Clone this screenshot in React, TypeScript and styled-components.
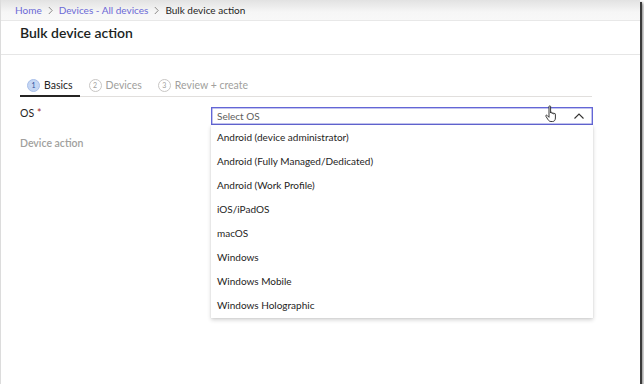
import React from "react";
import styled, { createGlobalStyle } from "styled-components";

const Global = createGlobalStyle`
  html, body { margin: 0; padding: 0; background: #ffffff; }
  body { font-family: Lato, "Noto Sans", sans-serif; color: #323130; }
  * { box-sizing: border-box; }
`;

const Frame = styled.div`
  position: relative;
  width: 640px;
  height: 384px;
  background: #fff;
  border-left: 1px solid #dcdcdc;
  box-shadow: 2px 2px 0 0 #3a3a3a, 3px 3px 3px 0 #7a7a7a;
  display: flex;
  flex-direction: column;
`;

const Breadcrumbs = styled.nav`
  height: 21px;
  flex: none;
  display: flex;
  align-items: center;
  gap: 5px;
  padding-left: 14px;
  font-size: 10px;
  background: linear-gradient(#e2e2e2, #f6f6f6 60%, #f8f8f8);
  border-bottom: 1px solid #e8e8e8;
`;

const Crumb = styled.span<{ $current?: boolean }>`
  color: ${(p) => (p.$current ? "#252423" : "#6b69d6")};
`;

const Sep = styled.svg`
  flex: none;
  margin: 0 1px;
`;

const TitleBar = styled.header`
  height: 34px;
  flex: none;
  padding: 3px 0 0 19px;
  font-size: 14px;
  font-weight: 600;
  color: #201f1e;
  border-bottom: 1px solid #e6e6e6;
`;

const Body = styled.main`
  flex: 1;
  padding: 20px 0 0 19px;
  position: relative;
`;

const Tabs = styled.div`
  width: 572px;
  display: flex;
  border-bottom: 1px solid #e1dfdd;
`;

const Tab = styled.div<{ $active?: boolean }>`
  display: flex;
  align-items: center;
  gap: 4px;
  height: 22px;
  padding: 0 7px 0 7px;
  margin-right: 2px;
  font-size: 10.5px;
  color: ${(p) => (p.$active ? "#252423" : "#a19f9d")};
  border-bottom: 2px solid ${(p) => (p.$active ? "#252423" : "transparent")};
  margin-bottom: -1px;
`;

const StepBadge = styled.span<{ $active?: boolean }>`
  width: 13px;
  height: 13px;
  border-radius: 50%;
  display: inline-flex;
  align-items: center;
  justify-content: center;
  font-size: 7px;
  background: ${(p) => (p.$active ? "#c5d6f3" : "#fff")};
  border: 1px solid ${(p) => (p.$active ? "#a8bfea" : "#c8c6c4")};
  color: ${(p) => (p.$active ? "#2b4f9e" : "#a19f9d")};
`;

const Form = styled.div`
  display: grid;
  grid-template-columns: 191px 382px;
  margin-top: 10px;
`;

const Label = styled.div<{ $muted?: boolean }>`
  font-size: 10.5px;
  height: 30px;
  font-weight: ${(p) => (p.$muted ? 600 : 400)};
  color: ${(p) => (p.$muted ? "#a19f9d" : "#252423")};
`;

const Req = styled.span`
  color: #a4262c;
  margin-left: 3px;
`;

const SelectWrap = styled.div`
  position: relative;
  grid-row: span 2;
`;

const SelectBox = styled.div`
  height: 18px;
  border: 1px solid #6366d6;
  box-shadow: inset 0 0 0 0.5px #8587e0;
  display: flex;
  align-items: center;
  justify-content: space-between;
  padding: 0 8px 0 5px;
  font-size: 10px;
  color: #605e5c;
`;

const Menu = styled.ul`
  position: absolute;
  left: 0;
  top: 18px;
  width: 382px;
  margin: 0;
  padding: 0 0 1px;
  list-style: none;
  background: #fff;
  box-shadow: 0 1.5px 4px rgba(0, 0, 0, 0.18), 0 0 1px rgba(0, 0, 0, 0.12);
  z-index: 2;
`;

const Option = styled.li`
  height: 24px;
  display: flex;
  align-items: center;
  padding-left: 6px;
  font-size: 10px;
  color: #252423;
`;

const Cursor = styled.svg`
  position: absolute;
  left: 334px;
  top: -2px;
  z-index: 3;
`;

const options = [
  "Android (device administrator)",
  "Android (Fully Managed/Dedicated)",
  "Android (Work Profile)",
  "iOS/iPadOS",
  "macOS",
  "Windows",
  "Windows Mobile",
  "Windows Holographic",
];

const Chevron = () => (
  <Sep width="5" height="9" viewBox="0 0 5 9">
    <path d="M0.8 1 L4.2 4.5 L0.8 8" fill="none" stroke="#8a8886" strokeWidth="1" />
  </Sep>
);

export default function App() {
  return (
    <>
      <Global />
      <Frame>
        <Breadcrumbs>
          <Crumb>Home</Crumb>
          <Chevron />
          <Crumb>Devices - All devices</Crumb>
          <Chevron />
          <Crumb $current>Bulk device action</Crumb>
        </Breadcrumbs>
        <TitleBar>Bulk device action</TitleBar>
        <Body>
          <Tabs>
            <Tab $active>
              <StepBadge $active>1</StepBadge>Basics
            </Tab>
            <Tab>
              <StepBadge>2</StepBadge>Devices
            </Tab>
            <Tab>
              <StepBadge>3</StepBadge>Review + create
            </Tab>
          </Tabs>
          <Form>
            <Label>
              OS<Req>*</Req>
            </Label>
            <SelectWrap>
              <SelectBox>
                <span>Select OS</span>
                <svg width="10" height="6" viewBox="0 0 10 6">
                  <path d="M0.5 5.5 L5 1 L9.5 5.5" fill="none" stroke="#323130" strokeWidth="1.1" />
                </svg>
              </SelectBox>
              <Cursor width="14" height="18" viewBox="0 0 14 18">
                <path
                  d="M4 1.5 C4 0.6 5.6 0.6 5.6 1.5 V8 C5.6 7 7.2 7 7.2 8 V8.6 C7.2 7.6 8.8 7.6 8.8 8.6 V9.2 C8.8 8.2 10.4 8.2 10.4 9.2 V13 C10.4 15 9.4 16.5 7.6 16.5 H6 C4.6 16.5 3.8 15.8 3 14.6 L0.9 11.3 C0.4 10.5 1.4 9.7 2.1 10.4 L4 12.3 Z"
                  fill="#fff"
                  stroke="#222"
                  strokeWidth="0.9"
                  strokeLinejoin="round"
                />
              </Cursor>
              <Menu>
                {options.map((o) => (
                  <Option key={o}>{o}</Option>
                ))}
              </Menu>
            </SelectWrap>
            <Label $muted>Device action</Label>
          </Form>
        </Body>
      </Frame>
    </>
  );
}
